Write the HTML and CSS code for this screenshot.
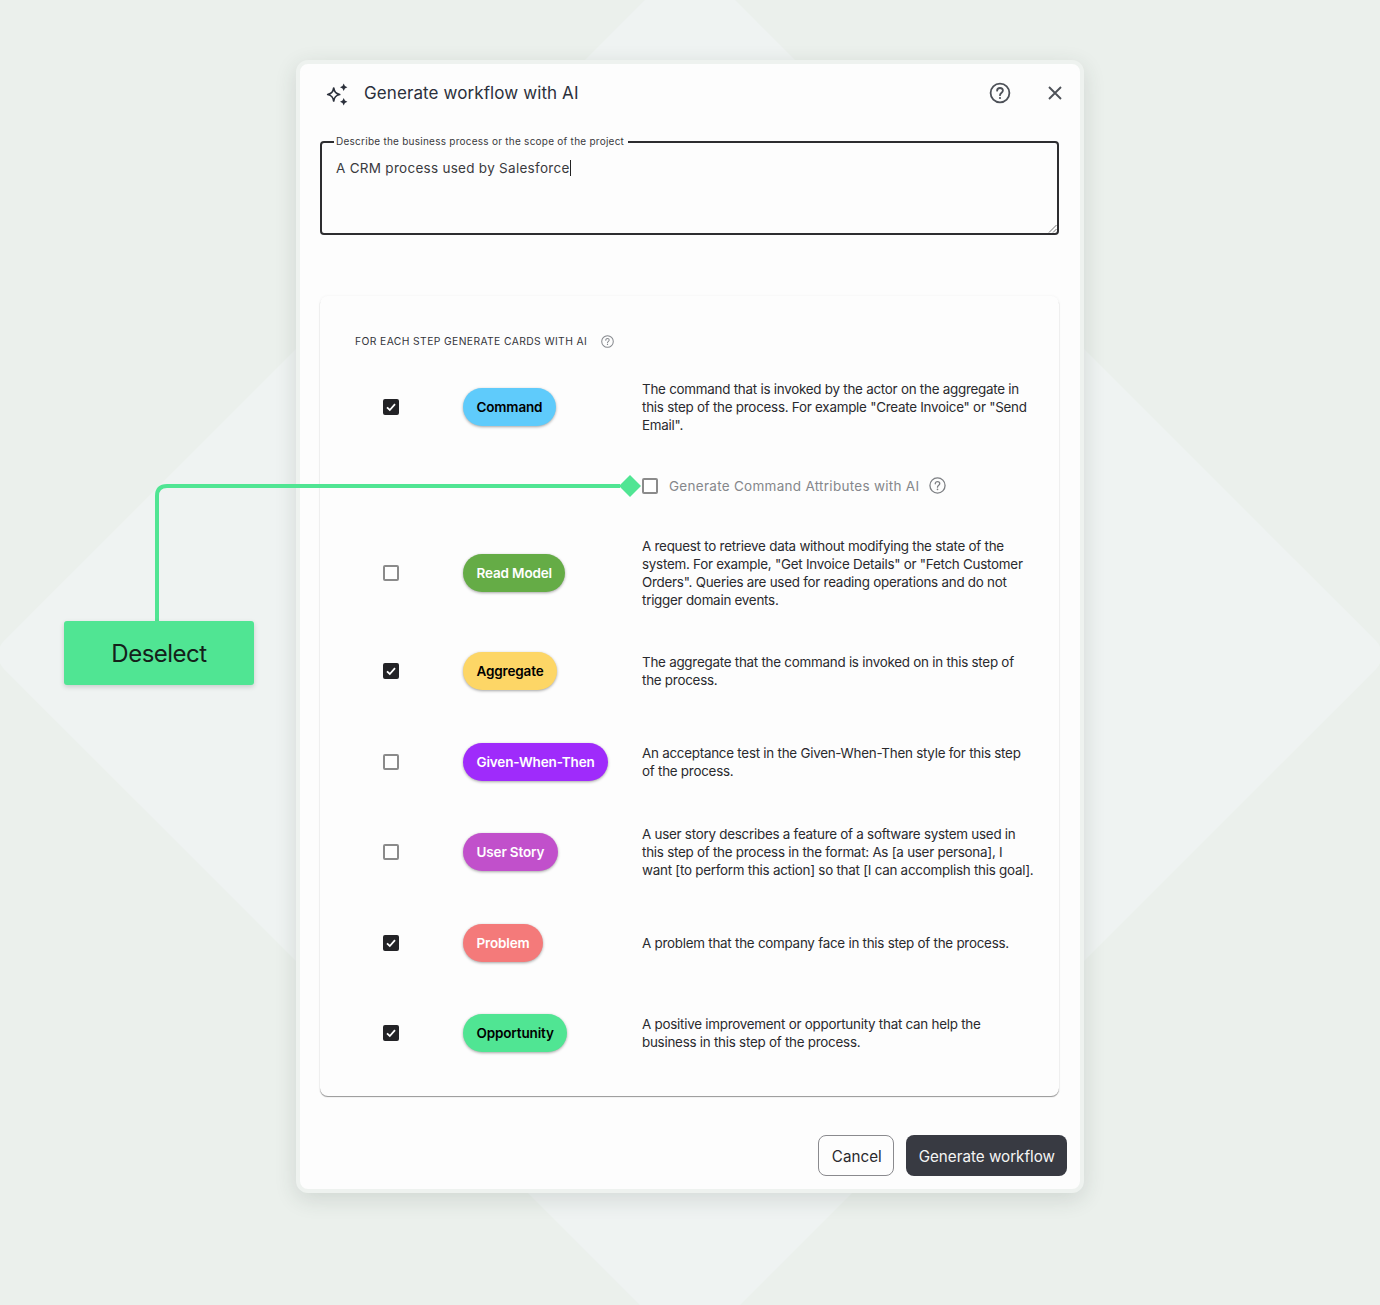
FILE: index.html
```html
<!DOCTYPE html>
<html>
<head>
    <meta charset="utf-8">
    <title>Generate workflow with AI</title>
    <link rel="stylesheet" href="styles.css">
</head>
<body>
    <div class="backdrop"></div>

    <div class="dialog">
        <div class="dialog-header">
            <svg class="sparkle" width="24" height="26" viewBox="0 0 24 26">
                <path d="M8.700 6 C9.300 10 10.700 11.400 14.700 12.500 C10.700 13.600 9.300 15 8.700 19 C8.100 15 6.700 13.600 2.700 12.500 C6.700 11.400 8.100 10 8.700 6 Z" fill="none" stroke="#2b303b" stroke-width="1.700" stroke-linejoin="round"/>
                <path d="M18.700 1.500 L19.900 4 L22.400 5.200 L19.900 6.400 L18.700 8.900 L17.500 6.400 L15 5.200 L17.500 4 Z" fill="#2b303b"/>
                <path d="M18.700 16.100 L19.900 18.600 L22.400 19.800 L19.900 21 L18.700 23.500 L17.500 21 L15 19.800 L17.500 18.600 Z" fill="#2b303b"/>
            </svg>
            <h1>Generate workflow with AI</h1>
            <svg class="help-big" width="22" height="22" viewBox="0 0 22 22" fill="none" stroke="#4d5158" stroke-width="1.800">
                <circle cx="11" cy="11" r="9.400"/>
                <path d="M8.100 8.700 C8.100 7 9.400 6 11 6 C12.700 6 13.900 7.100 13.900 8.600 C13.900 10.700 11 10.700 11 13.200" stroke-linecap="round"/>
                <circle cx="11" cy="16" r="1.100" fill="#4d5158" stroke="none"/>
            </svg>
            <svg class="close" width="14" height="14" viewBox="0 0 14 14" fill="none" stroke="#4d5158" stroke-width="1.900">
                <path d="M1 1 L13 13 M13 1 L1 13"/>
            </svg>
        </div>

        <fieldset class="describe">
            <legend>Describe the business process or the scope of the project</legend>
            <div class="describe-text">
                <span class="caret">A CRM process used by Salesforce</span>
                <svg class="grip" width="9" height="9" viewBox="0 0 9 9" stroke="#777" stroke-width="1">
                    <path d="M1 8.500 L8.500 1 M5 8.500 L8.500 5"/>
                </svg>
            </div>
        </fieldset>

        <div class="card">
            <div class="card-title">
                <span>For each step generate cards with AI</span>
                <svg width="13" height="13" viewBox="0 0 22 22" fill="none" stroke="#85888d" stroke-width="1.700">
                    <circle cx="11" cy="11" r="9.800"/>
                    <path d="M8.100 8.700 C8.100 7 9.400 6 11 6 C12.700 6 13.900 7.100 13.900 8.600 C13.900 10.700 11 10.700 11 13.200" stroke-linecap="round"/>
                    <circle cx="11" cy="16" r="1.100" fill="#85888d" stroke="none"/>
                </svg>
            </div>

            <div class="row">
                <span class="check on"><svg width="12" height="12" viewBox="0 0 12 12"><path d="M2 6.300 L4.800 9 L10 3.200" fill="none" stroke="#fff" stroke-width="1.800"/></svg></span>
                <span class="pill"><span class="pill-label command">Command</span></span>
                <p>The command that is invoked by the actor on the aggregate in this step of the process. For example "Create Invoice" or "Send Email".</p>
            </div>

            <div class="sub-row">
                <span class="check"></span>
                <span class="sub-label">Generate Command Attributes with AI</span>
                <svg width="17" height="17" viewBox="0 0 22 22" fill="none" stroke="#7d7f83" stroke-width="1.700">
                    <circle cx="11" cy="11" r="9.800"/>
                    <path d="M8.100 8.700 C8.100 7 9.400 6 11 6 C12.700 6 13.900 7.100 13.900 8.600 C13.900 10.700 11 10.700 11 13.200" stroke-linecap="round"/>
                    <circle cx="11" cy="16" r="1.100" fill="#7d7f83" stroke="none"/>
                </svg>
            </div>

            <div class="row tall">
                <span class="check"></span>
                <span class="pill"><span class="pill-label read-model">Read Model</span></span>
                <p>A request to retrieve data without modifying the state of the system. For example, "Get Invoice Details" or "Fetch Customer Orders". Queries are used for reading operations and do not trigger domain events.</p>
            </div>

            <div class="row">
                <span class="check on"><svg width="12" height="12" viewBox="0 0 12 12"><path d="M2 6.300 L4.800 9 L10 3.200" fill="none" stroke="#fff" stroke-width="1.800"/></svg></span>
                <span class="pill"><span class="pill-label aggregate">Aggregate</span></span>
                <p>The aggregate that the command is invoked on in this step of the process.</p>
            </div>

            <div class="row">
                <span class="check"></span>
                <span class="pill"><span class="pill-label gwt">Given-When-Then</span></span>
                <p>An acceptance test in the Given-When-Then style for this step of the process.</p>
            </div>

            <div class="row">
                <span class="check"></span>
                <span class="pill"><span class="pill-label user-story">User Story</span></span>
                <p>A user story describes a feature of a software system used in this step of the process in the format: As [a user persona], I want [to perform this action] so that [I can accomplish this goal].</p>
            </div>

            <div class="row">
                <span class="check on"><svg width="12" height="12" viewBox="0 0 12 12"><path d="M2 6.300 L4.800 9 L10 3.200" fill="none" stroke="#fff" stroke-width="1.800"/></svg></span>
                <span class="pill"><span class="pill-label problem">Problem</span></span>
                <p>A problem that the company face in this step of the process.</p>
            </div>

            <div class="row">
                <span class="check on"><svg width="12" height="12" viewBox="0 0 12 12"><path d="M2 6.300 L4.800 9 L10 3.200" fill="none" stroke="#fff" stroke-width="1.800"/></svg></span>
                <span class="pill"><span class="pill-label opportunity">Opportunity</span></span>
                <p>A positive improvement or opportunity that can help the business in this step of the process.</p>
            </div>
        </div>

        <div class="dialog-footer">
            <div class="btn cancel-btn">Cancel</div>
            <div class="btn generate-btn">Generate workflow</div>
        </div>
    </div>

    <!-- annotation on top of the dialog -->
    <svg class="connector" width="500" height="150" viewBox="0 0 500 150">
        <path d="M2 148 L2 12 Q2 2 12 2 L465 2" fill="none" stroke="#50e593" stroke-width="4"/>
        <path d="M464 2 L475 -9 L486 2 L475 13 Z" fill="#50e593"/>
    </svg>
    <div class="callout">Deselect</div>
</body>
</html>
```

FILE: styles.css
```css
html, body {
    margin: 0;
    height: 1305px;
}

body {
    position: relative;
    overflow: hidden;
    background: #ebf0ec;
    font-family: 'Inter', sans-serif;
    font-size: 14px;
    color: #2a2a2e;
}

.backdrop {
    position: absolute;
    left: 195px;
    top: 160px;
    width: 990px;
    height: 990px;
    background: #eff3f2;
    border-radius: 20px;
    transform: rotate(45deg);
}

.dialog {
    position: relative;
    box-sizing: border-box;
    width: 788px;
    height: 1133px;
    margin: 60px auto 0;
    border: 4px solid #eef2ef;
    border-radius: 12px;
    background: #fdfdfd;
    box-shadow: 0 6px 22px rgba(40, 60, 50, 0.14);
    display: flex;
    flex-direction: column;
}

.dialog-header {
    height: 70px;
    padding: 0 18px 12px 25px;
    display: flex;
    align-items: center;
    box-sizing: border-box;
    flex-shrink: 0;
}

.dialog-header h1 {
    margin: 0 0 0 15px;
    flex: 1;
    font-size: 17px;
    font-weight: 400;
    letter-spacing: 0.1px;
    color: #2b303b;
}

.sparkle {
    margin-top: 3px;
}

.help-big {
    margin-right: 37px;
}

.describe {
    margin: 0 21px 0 20px;
    padding: 0 14px;
    height: 101px;
    box-sizing: border-box;
    border: 2px solid #2d2d30;
    border-radius: 4px;
    min-width: 0;
}

.describe legend {
    padding: 0 4px 2px 2px;
    margin-left: -2px;
    font-size: 10px;
    line-height: 14px;
    letter-spacing: 0.25px;
    color: #3a3a3e;
}

.describe-text {
    position: relative;
    height: 83px;
    margin: 0 -14px;
    padding: 8px 14px 0;
    box-sizing: border-box;
    font-size: 13.500px;
    line-height: 20px;
    letter-spacing: 0.28px;
    color: #3a3a3e;
}

.caret {
    border-right: 1px solid #222;
}

.grip {
    position: absolute;
    right: 0;
    bottom: 0;
}

.card {
    margin: 61px 21px 0 20px;
    height: 800px;
    box-sizing: border-box;
    padding: 0 24px 0 35px;
    flex-shrink: 0;
    border-radius: 8px;
    background: #fdfdfd;
    box-shadow: 0 1.500px 1px -0.500px rgba(0, 0, 0, 0.4), 0 0 3px rgba(0, 0, 0, 0.05);
}

.card-title {
    height: 66px;
    padding-top: 39px;
    box-sizing: border-box;
    display: flex;
    align-items: flex-start;
    gap: 14px;
    font-size: 10.300px;
    line-height: 13px;
    letter-spacing: 0.4px;
    text-transform: uppercase;
    color: #33343a;
}

.row {
    display: grid;
    grid-template-columns: 108px 179px 1fr;
    align-items: center;
    box-sizing: border-box;
    min-height: 90.400px;
}

.row.tall {
    padding: 17.450px 0;
}

.row .check {
    margin-left: 28px;
}

.row p {
    margin: 0;
    line-height: 18px;
    font-size: 13.400px;
    letter-spacing: -0.25px;
    color: #2a2a2e;
}

.sub-row {
    height: 67px;
    margin-left: 287px;
    display: flex;
    align-items: center;
}

.sub-label {
    margin: 0 10px 0 11px;
    font-size: 13.500px;
    letter-spacing: 0.28px;
    color: #85878b;
}

.check {
    width: 16px;
    height: 16px;
    box-sizing: border-box;
    border: 2px solid #8b8b8b;
    border-radius: 2px;
    background: #fff;
    display: flex;
    align-items: center;
    justify-content: center;
}

.check.on {
    border-color: #232326;
    background: #232326;
}

.pill {
    display: flex;
}

.pill-label {
    height: 38px;
    padding: 0 13.500px;
    border-radius: 19px;
    font-size: 13.500px;
    font-weight: 600;
    line-height: 38px;
    letter-spacing: -0.15px;
    white-space: nowrap;
    color: #fff;
    box-shadow: 0 1px 3px rgba(0, 0, 0, 0.35);
}

.command { background: #5fcbfb; color: #000; }
.read-model { background: #65ac46; }
.aggregate { background: #fdd666; color: #000; }
.gwt { background: #9f2bfb; }
.user-story { background: #c150cb; }
.problem { background: #f47a7a; }
.opportunity { background: #50e593; color: #000; }

.dialog-footer {
    margin-top: 39px;
    padding-right: 13px;
    display: flex;
    justify-content: flex-end;
    gap: 12px;
}

.btn {
    height: 41px;
    box-sizing: border-box;
    padding: 0 12px 0 13px;
    border-radius: 8px;
    font-size: 15.200px;
    line-height: 43px;
}

.cancel-btn {
    padding: 0 11px 0 13px;
    border: 1px solid #8a8a8e;
    line-height: 41px;
    color: #2a2a2e;
}

.generate-btn {
    background: #383a42;
    color: #f4f4f4;
}

.connector {
    position: absolute;
    left: 155px;
    top: 484px;
    overflow: visible;
}

.callout {
    position: absolute;
    left: 64px;
    top: 621px;
    width: 190px;
    height: 64px;
    border-radius: 3px;
    background: #50e593;
    box-shadow: 0 2px 5px rgba(0, 0, 0, 0.16);
    font-size: 24px;
    line-height: 66px;
    text-align: center;
    letter-spacing: -0.5px;
    color: #14211a;
}
```
